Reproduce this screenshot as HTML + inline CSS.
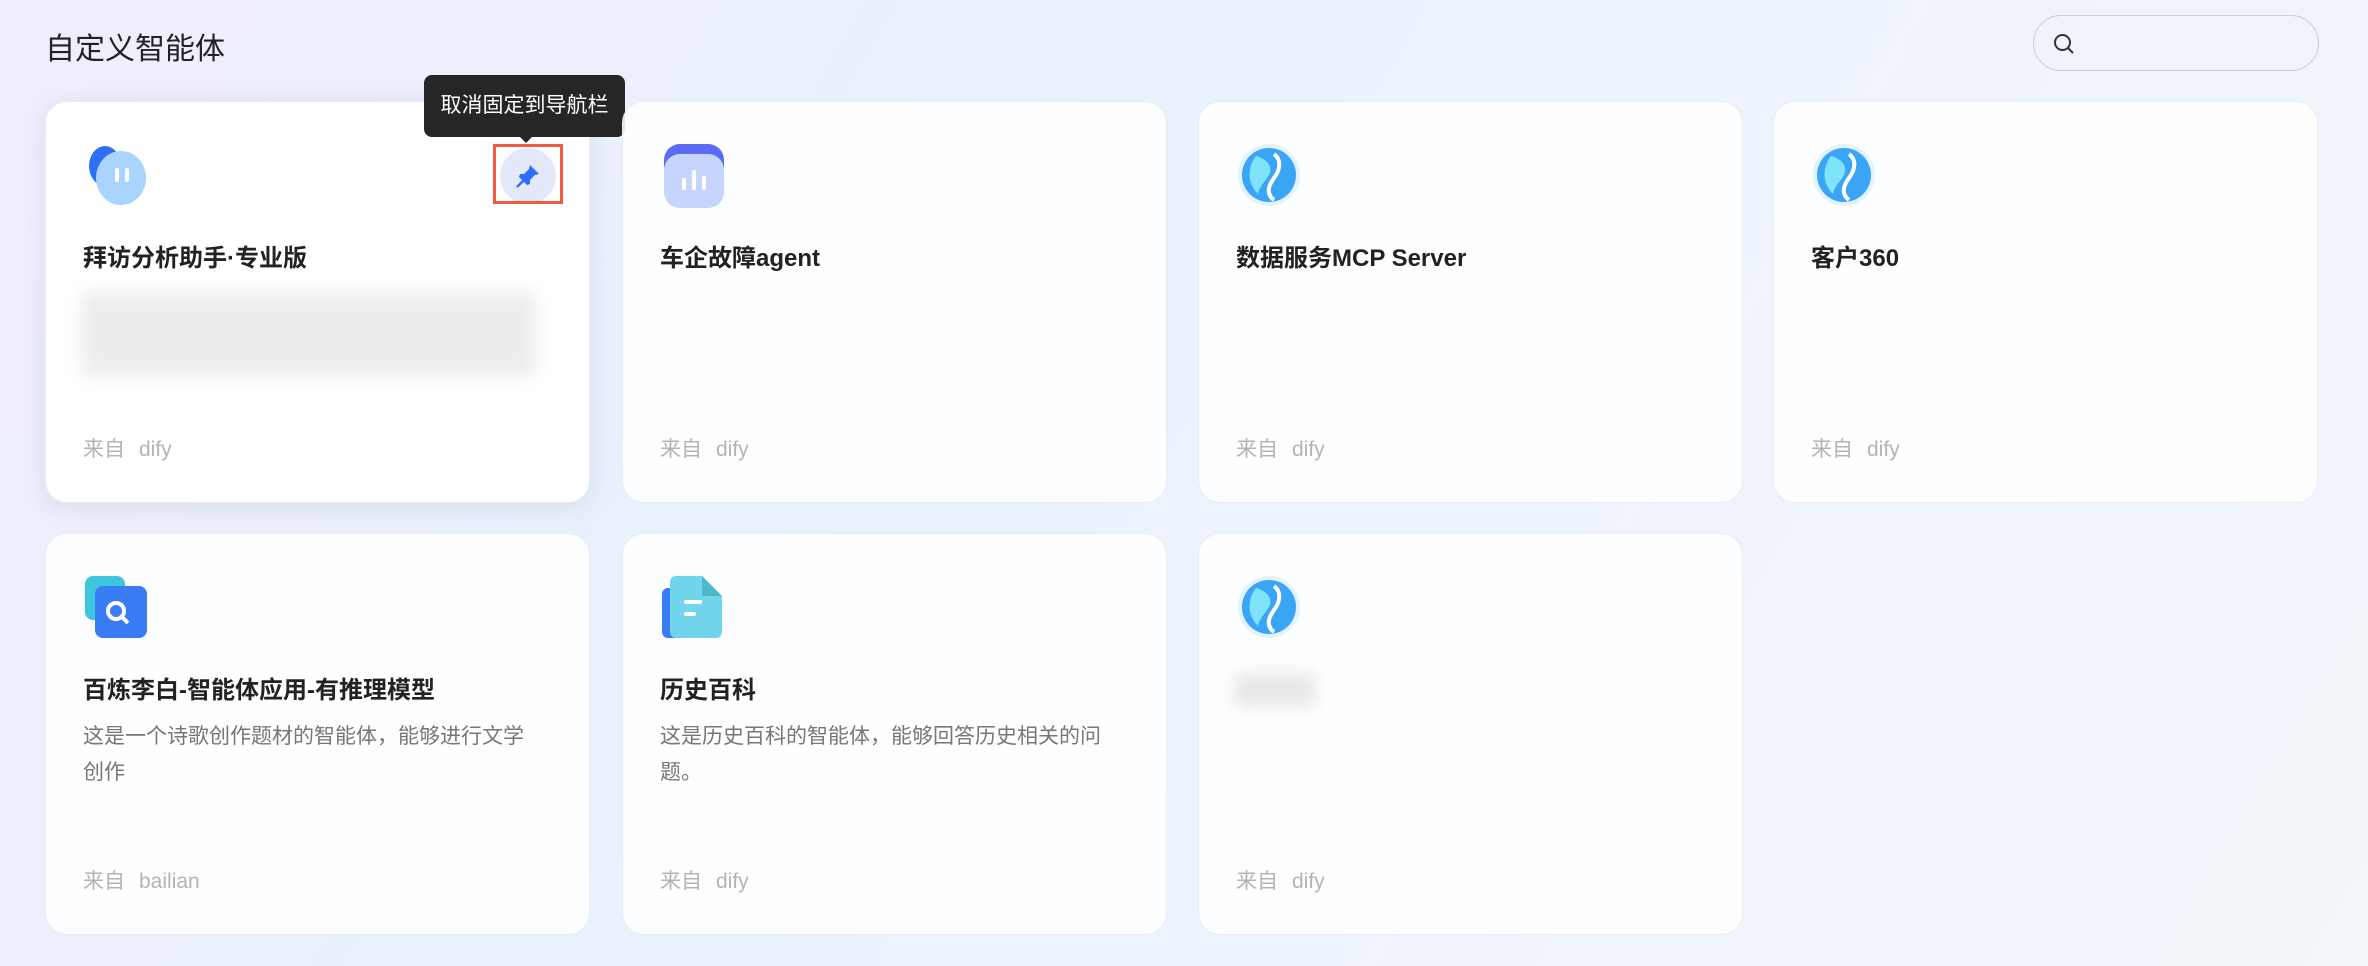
<!DOCTYPE html>
<html><head><meta charset="utf-8"><style>
*{box-sizing:border-box;margin:0;padding:0}
body{width:2368px;height:966px;overflow:hidden;font-family:"Liberation Sans","Noto Sans CJK SC",sans-serif;background:linear-gradient(120deg,#f1eefb 0%,#e8f1fd 35%,#eef4fd 60%,#f3f6fb 100%);position:relative}
h1{position:absolute;left:45px;top:24px;font-size:30px;font-weight:400;color:#222}
.search{position:absolute;left:2033px;top:15px;width:286px;height:56px;border:1.5px solid #c7cfdc;border-radius:28px}
.card{position:absolute;width:545px;height:402px;background:rgba(255,255,255,.88);border:1px solid #e8ecf3;border-radius:22px}
.card.hl{background:#fff;box-shadow:0 4px 24px rgba(100,110,140,.15)}
.ic{position:absolute;left:37px;top:40px;width:66px;height:66px}
.t{position:absolute;left:37px;top:136px;font-size:24px;font-weight:700;color:#222}
.d{position:absolute;left:37px;top:185px;width:458px;font-size:21px;line-height:36px;color:#777}
.f{position:absolute;left:37px;top:331px;font-size:21px;color:#b4b4b4}
.f span{margin-left:14px}
.blur{position:absolute;background:#e6e6e6;filter:blur(8px)}
</style></head><body>
<h1>自定义智能体</h1>
<div class="search"><svg style="position:absolute;left:18px;top:16px" width="24" height="24" viewBox="0 0 24 24" fill="none" stroke="#333" stroke-width="2"><circle cx="10.5" cy="10.5" r="7.5"/><path d="M16 16l5 5"/></svg></div>

<div class="card hl" style="left:45px;top:101px">
<svg class="ic" viewBox="0 0 66 66"><ellipse cx="22" cy="24" rx="16" ry="20" fill="#2f6ff5"/><ellipse cx="38" cy="36" rx="25" ry="27" fill="#a9d4fd"/><rect x="32" y="26" width="4" height="14" rx="2" fill="#fff"/><rect x="42" y="26" width="4" height="14" rx="2" fill="#fff"/></svg>
<div style="position:absolute;left:454px;top:46px;width:56px;height:56px;border-radius:50%;background:#e3e9fa"></div>
<svg style="position:absolute;left:468px;top:60px" width="28" height="28" viewBox="0 0 28 28"><path d="M16 3l9 9-4 1-5 5 0 4-3 1-8-8 1-3 4 0 5-5z" fill="#2f6ff5"/><path d="M10 18L3 25" stroke="#2f6ff5" stroke-width="2.5"/></svg>
<div style="position:absolute;left:447px;top:42px;width:70px;height:60px;border:3px solid #f05a45"></div>
<div class="t">拜访分析助手·专业版</div>
<div class="blur" style="left:35px;top:190px;width:455px;height:85px;opacity:.7"></div>
<div class="f">来自<span>dify</span></div>
</div>
<div style="position:absolute;left:424px;top:75px;width:201px;height:62px;background:#262626;border-radius:8px;color:#fff;font-size:21px;line-height:62px;text-align:center">取消固定到导航栏</div>
<div style="position:absolute;left:519px;top:136px;border:7px solid transparent;border-top-color:#262626"></div>

<div class="card" style="left:622px;top:101px">
<svg class="ic" viewBox="0 0 66 66"><rect x="4" y="2" width="60" height="50" rx="16" fill="#5a6cf4"/><rect x="4" y="12" width="60" height="54" rx="16" fill="#c5d5fd"/><rect x="22" y="36" width="4" height="12" rx="2" fill="#fff"/><rect x="32" y="28" width="4" height="20" rx="2" fill="#fff"/><rect x="42" y="34" width="4" height="14" rx="2" fill="#fff"/></svg>
<div class="t">车企故障agent</div>
<div class="f">来自<span>dify</span></div>
</div>

<div class="card" style="left:1198px;top:101px">
<svg class="ic" viewBox="0 0 66 66"><circle cx="33" cy="33" r="31" fill="#e3f3fd"/><circle cx="33" cy="33" r="27" fill="#3aa4f5"/><path d="M20 14c-8 10-10 26 2 38 2-10 10-14 12-22 2-8-6-14-14-16z" fill="#7fe4fb"/><path d="M38 12c8 6 6 16 0 24s-8 16 0 22" stroke="#fff" stroke-width="4" fill="none"/></svg>
<div class="t">数据服务MCP Server</div>
<div class="f">来自<span>dify</span></div>
</div>

<div class="card" style="left:1773px;top:101px">
<svg class="ic" viewBox="0 0 66 66"><circle cx="33" cy="33" r="31" fill="#e3f3fd"/><circle cx="33" cy="33" r="27" fill="#3aa4f5"/><path d="M20 14c-8 10-10 26 2 38 2-10 10-14 12-22 2-8-6-14-14-16z" fill="#7fe4fb"/><path d="M38 12c8 6 6 16 0 24s-8 16 0 22" stroke="#fff" stroke-width="4" fill="none"/></svg>
<div class="t">客户360</div>
<div class="f">来自<span>dify</span></div>
</div>

<div class="card" style="left:45px;top:533px">
<svg class="ic" viewBox="0 0 66 66"><rect x="2" y="2" width="40" height="44" rx="8" fill="#3ec6dc"/><rect x="12" y="12" width="52" height="52" rx="8" fill="#3a7cf5"/><circle cx="33" cy="37" r="8" fill="none" stroke="#fff" stroke-width="4"/><path d="M39 43l6 6" stroke="#fff" stroke-width="4"/></svg>
<div class="t">百炼李白-智能体应用-有推理模型</div>
<div class="d">这是一个诗歌创作题材的智能体，能够进行文学创作</div>
<div class="f">来自<span>bailian</span></div>
</div>

<div class="card" style="left:622px;top:533px">
<svg class="ic" viewBox="0 0 66 66"><rect x="2" y="14" width="26" height="50" rx="6" fill="#3a7cf5"/><path d="M10 2h32l20 20v36a6 6 0 0 1-6 6H16a6 6 0 0 1-6-6V8a6 6 0 0 1 6-6z" fill="#72d5ee"/><path d="M42 2l20 20H42z" fill="#4fb8c6"/><rect x="24" y="26" width="18" height="4" rx="2" fill="#fff"/><rect x="24" y="38" width="12" height="4" rx="2" fill="#fff"/></svg>
<div class="t">历史百科</div>
<div class="d">这是历史百科的智能体，能够回答历史相关的问题。</div>
<div class="f">来自<span>dify</span></div>
</div>

<div class="card" style="left:1198px;top:533px">
<svg class="ic" viewBox="0 0 66 66"><circle cx="33" cy="33" r="31" fill="#e3f3fd"/><circle cx="33" cy="33" r="27" fill="#3aa4f5"/><path d="M20 14c-8 10-10 26 2 38 2-10 10-14 12-22 2-8-6-14-14-16z" fill="#7fe4fb"/><path d="M38 12c8 6 6 16 0 24s-8 16 0 22" stroke="#fff" stroke-width="4" fill="none"/></svg>
<div class="blur" style="left:36px;top:140px;width:80px;height:32px"></div>
<div class="f">来自<span>dify</span></div>
</div>
</body></html>
